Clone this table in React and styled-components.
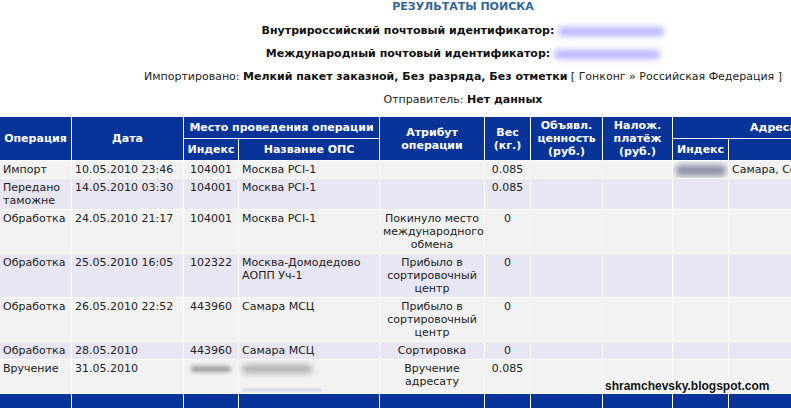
import React from "react";
import styled, { createGlobalStyle } from "styled-components";

const Global = createGlobalStyle`
  html, body { margin: 0; padding: 0; background: #fff; overflow: hidden; }
  body { font-family: "DejaVu Sans", Verdana, sans-serif; font-size: 11px; color: #222; }
`;

const Page = styled.div`
  position: relative;
  width: 926px;
  text-align: center;
`;

const Title = styled.div`
  font-weight: bold;
  color: #336699;
  line-height: 14px;
`;

const InfoLine = styled.div`
  margin-top: 10px;
  line-height: 13px;
  color: #222;
  white-space: nowrap;
`;

const Bold = styled.b`
  font-weight: bold;
  color: #111;
`;

const Blur = styled.span`
  display: inline-block;
  vertical-align: middle;
  width: ${(p) => p.$w}px;
  height: ${(p) => p.$h || 9}px;
  margin-left: ${(p) => p.$ml || 0}px;
  background: ${(p) => p.$c};
  border-radius: 4px;
  filter: blur(${(p) => p.$b || 3}px);
`;

const Table = styled.table`
  margin-top: 11px;
  width: 926px;
  table-layout: fixed;
  border-collapse: separate;
  border-spacing: 0;
`;

const Th = styled.th`
  background: #08349a;
  color: #fff;
  font-weight: bold;
  line-height: 13px;
  padding: 2px 2px;
  border-right: 1px solid #fff;
  border-bottom: 1px solid #fff;
  text-align: center;
  vertical-align: middle;
  white-space: ${(p) => (p.$nowrap ? "nowrap" : "normal")};
  overflow: hidden;
`;

const Tr = styled.tr`
  background: ${(p) => (p.$alt ? "#e7e6f2" : "#f2f2f2")};
`;

const Td = styled.td`
  line-height: 13px;
  padding: 2px 3px;
  border-right: 1px solid #fff;
  border-bottom: 1px solid #fff;
  vertical-align: top;
  text-align: ${(p) => p.$align || "left"};
  color: #222;
  white-space: ${(p) => (p.$nowrap ? "nowrap" : "normal")};
  overflow: hidden;
`;

const FootCell = styled.td`
  background: #08349a;
  height: 20px;
  padding: 0;
  border-right: 1px solid #fff;
`;

const Watermark = styled.div`
  position: absolute;
  left: 605px;
  top: 379px;
  font-family: "Liberation Sans", Arial, sans-serif;
  font-size: 12px;
  font-weight: bold;
  color: #111;
  text-shadow: 0 0 2px #fff, 0 0 2px #fff;
  white-space: nowrap;
`;

const widths = [72, 112, 55, 141, 105, 46, 72, 70, 56, 152, 45];

const rows = [
  { op: "Импорт", date: "10.05.2010 23:46", idx: "104001", name: "Москва PCI-1", attr: "", w: "0.085", addr: true },
  { op: "Передано таможне", date: "14.05.2010 03:30", idx: "104001", name: "Москва PCI-1", attr: "", w: "0.085" },
  { op: "Обработка", date: "24.05.2010 21:17", idx: "104001", name: "Москва PCI-1", attr: "Покинуло место международного обмена", w: "0" },
  { op: "Обработка", date: "25.05.2010 16:05", idx: "102322", name: "Москва-Домодедово АОПП Уч-1", attr: "Прибыло в сортировочный центр", w: "0" },
  { op: "Обработка", date: "26.05.2010 22:52", idx: "443960", name: "Самара МСЦ", attr: "Прибыло в сортировочный центр", w: "0" },
  { op: "Обработка", date: "28.05.2010", idx: "443960", name: "Самара МСЦ", attr: "Сортировка", w: "0" },
  { op: "Вручение", date: "31.05.2010", hidden: true, attr: "Вручение адресату", w: "0.085" },
];

export default function App() {
  return (
    <>
      <Global />
      <Page>
        <Title>РЕЗУЛЬТАТЫ ПОИСКА</Title>
        <InfoLine>
          <Bold>Внутрироссийский почтовый идентификатор:</Bold>
          <Blur $w={106} $ml={4} $c="#b3b3ff" />
        </InfoLine>
        <InfoLine>
          <Bold>Международный почтовый идентификатор:</Bold>
          <Blur $w={106} $ml={4} $c="#b3b3ff" />
        </InfoLine>
        <InfoLine>
          Импортировано: <Bold>Мелкий пакет заказной, Без разряда, Без отметки</Bold> [ Гонконг » Российская Федерация ]
        </InfoLine>
        <InfoLine>
          Отправитель: <Bold>Нет данных</Bold>
        </InfoLine>

        <Table>
          <colgroup>
            {widths.map((w, i) => (
              <col key={i} style={{ width: w }} />
            ))}
          </colgroup>
          <thead>
            <tr>
              <Th rowSpan={2}>Операция</Th>
              <Th rowSpan={2}>Дата</Th>
              <Th colSpan={2} $nowrap>Место проведения операции</Th>
              <Th rowSpan={2}>Атрибут операции</Th>
              <Th rowSpan={2}>Вес (кг.)</Th>
              <Th rowSpan={2}>Объявл. ценность (руб.)</Th>
              <Th rowSpan={2}>Налож. платёж (руб.)</Th>
              <Th colSpan={2} $nowrap>Адресат</Th>
              <Th rowSpan={2}></Th>
            </tr>
            <tr>
              <Th>Индекс</Th>
              <Th>Название ОПС</Th>
              <Th>Индекс</Th>
              <Th></Th>
            </tr>
          </thead>
          <tbody>
            {rows.map((r, i) => (
              <Tr key={i} $alt={i % 2 === 1}>
                <Td>{r.op}</Td>
                <Td $nowrap>{r.date}</Td>
                <Td $align="center">
                  {r.hidden ? <Blur $w={40} $h={6} $c="#9a9a9a" $b={2} /> : r.idx}
                </Td>
                <Td>
                  {r.hidden ? (
                    <>
                      <Blur $w={70} $h={8} $c="#a8a8a8" $b={3} />
                      <br />
                      <Blur $w={80} $h={2} $c="#c8c8e8" $b={1} style={{ marginTop: 14 }} />
                    </>
                  ) : (
                    r.name
                  )}
                </Td>
                <Td $align="center">{r.attr}</Td>
                <Td $align="center">{r.w}</Td>
                <Td></Td>
                <Td></Td>
                <Td $align="center">
                  {r.addr ? <Blur $w={50} $h={11} $c="#8a8fa6" $b={3} /> : null}
                </Td>
                <Td $nowrap>{r.addr ? "Самара, Советский" : ""}</Td>
                <Td></Td>
              </Tr>
            ))}
            <tr>
              {widths.map((w, i) => (
                <FootCell key={i} />
              ))}
            </tr>
          </tbody>
        </Table>
        <Watermark>shramchevsky.blogspot.com</Watermark>
      </Page>
    </>
  );
}
